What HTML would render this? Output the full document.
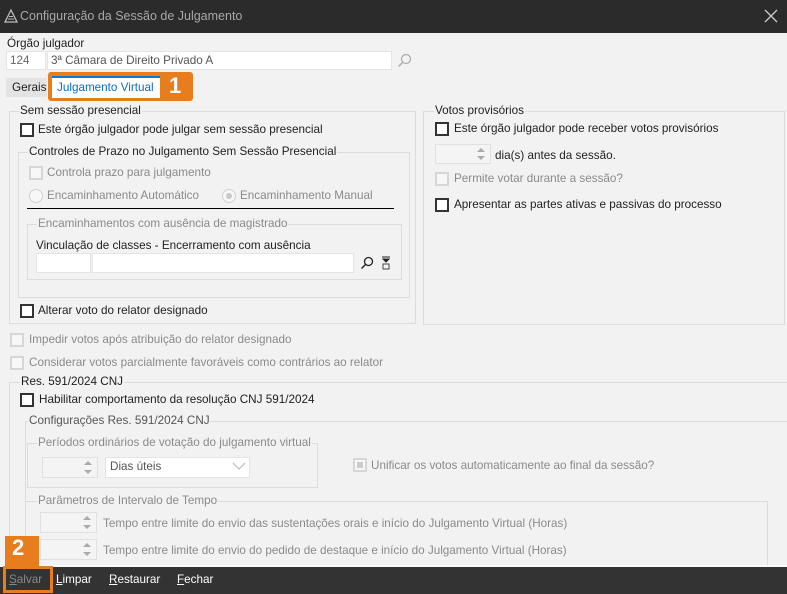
<!DOCTYPE html>
<html style="overflow:hidden;width:787px;height:594px"><head><meta charset="utf-8"><style>
*{box-sizing:border-box;margin:0;padding:0}
body{width:787px;height:594px;background:#f2f2f2;font-family:"Liberation Sans",sans-serif;font-size:11.7px;color:#1e1e1e;position:relative;overflow:hidden}
.a{position:absolute;white-space:nowrap}
.g{position:absolute;border:1px solid #dcdcdc}
.lg{position:absolute;background:#f2f2f2;padding:0 1px;line-height:14px;white-space:nowrap}
.cb{position:absolute;width:14px;height:14px;border:2px solid #333;background:#fff}
.cbd{position:absolute;width:14px;height:14px;border:2px solid #d6d6d6;background:#f7f7f7}
.dis{color:#8a8a8a}
.inp{position:absolute;background:#fff;border:1px solid #e4e4e4}
.sp{position:absolute;background:#f4f4f4;border:1px solid #e0e0e0}
.sp:after{content:"";position:absolute;right:5px;top:3px;border:4px solid transparent;border-bottom:4px solid #aaa;border-top:0}
.sp:before{content:"";position:absolute;right:5px;bottom:3px;border:4px solid transparent;border-top:4px solid #aaa;border-bottom:0}
.rd{position:absolute;width:14px;height:14px;border-radius:50%;border:1px solid #d0d0d0;background:#f7f7f7}
</style></head><body>
<div class="a" style="left:0;top:0;width:787px;height:33px;background:#2b2b2b"></div>
<svg class="a" style="left:4px;top:9px" width="14" height="14" viewBox="0 0 14 14"><path d="M7 1L1 13h12z" fill="none" stroke="#bbb" stroke-width="1.3"/><path d="M4 10h6M5 7.5h4" stroke="#bbb"/></svg>
<div class="a" style="left:20px;top:9px;color:#a8a8a8;font-size:12.5px">Configuração da Sessão de Julgamento</div>
<svg class="a" style="left:764px;top:9px" width="14" height="14"><path d="M1 1L13 13M13 1L1 13" stroke="#ccc" stroke-width="1.3"/></svg>

<div class="a" style="left:7px;top:37px">Órgão julgador</div>
<div class="inp" style="left:6px;top:51px;width:40px;height:19px"></div>
<div class="a dis" style="left:10px;top:54px;color:#666">124</div>
<div class="inp" style="left:47px;top:51px;width:345px;height:19px"></div>
<div class="a" style="left:51px;top:54px;color:#555">3ª Câmara de Direito Privado A</div>
<svg class="a" style="left:397px;top:53px" width="15" height="15"><circle cx="9" cy="6" r="4.5" fill="none" stroke="#aaa" stroke-width="1.2"/><path d="M6 9L1.5 13.5" stroke="#aaa" stroke-width="1.3"/></svg>

<div class="a" style="left:6px;top:78px;width:41px;height:19px;background:#e3e3e3"></div>
<div class="a" style="left:12px;top:81px">Gerais</div>
<div class="a" style="left:48px;top:72px;width:145px;height:29px;background:#e87d1e;border-radius:3px"></div>
<div class="a" style="left:52px;top:76px;width:108px;height:22px;background:#fff;border-top:2px solid #0a7ad8"></div>
<div class="a" style="left:57px;top:81px;color:#0a6cc4">Julgamento Virtual</div>
<div class="a" style="left:169px;top:73px;color:#fff;font-size:22px;font-weight:bold">1</div>

<div class="g" style="left:9px;top:111px;width:407px;height:213px"></div>
<div class="lg" style="left:19px;top:104px">Sem sessão presencial</div>
<div class="cb" style="left:20px;top:123px"></div>
<div class="a" style="left:38px;top:123px">Este órgão julgador pode julgar sem sessão presencial</div>
<div class="g" style="left:18px;top:152px;width:392px;height:146px"></div>
<div class="lg" style="left:28px;top:145px">Controles de Prazo no Julgamento Sem Sessão Presencial</div>
<div class="cbd" style="left:29px;top:166px"></div>
<div class="a dis" style="left:47px;top:166px">Controla prazo para julgamento</div>
<div class="rd" style="left:29px;top:189px"></div>
<div class="a dis" style="left:47px;top:189px">Encaminhamento Automático</div>
<div class="rd" style="left:222px;top:189px"></div>
<div class="a" style="left:226px;top:193px;width:6px;height:6px;border-radius:50%;background:#c8c8c8"></div>
<div class="a dis" style="left:240px;top:189px">Encaminhamento Manual</div>
<div class="a" style="left:27px;top:208px;width:367px;height:1px;background:#000"></div>
<div class="g" style="left:27px;top:224px;width:375px;height:56px"></div>
<div class="lg dis" style="left:37px;top:217px">Encaminhamentos com ausência de magistrado</div>
<div class="a" style="left:36px;top:239px">Vinculação de classes - Encerramento com ausência</div>
<div class="inp" style="left:36px;top:253px;width:55px;height:20px"></div>
<div class="inp" style="left:92px;top:253px;width:262px;height:20px"></div>
<svg class="a" style="left:360px;top:256px" width="14" height="14"><circle cx="8.5" cy="5.5" r="4" fill="none" stroke="#222" stroke-width="1.3"/><path d="M5.5 8.5L1.5 12.5" stroke="#222" stroke-width="1.4"/></svg>
<svg class="a" style="left:381px;top:256px" width="11" height="14"><path d="M1 1h8M2 3h6l-3 3z" stroke="#222" fill="#222"/><rect x="2" y="8" width="6" height="5" fill="none" stroke="#444"/></svg>
<div class="cb" style="left:20px;top:304px"></div>
<div class="a" style="left:38px;top:304px">Alterar voto do relator designado</div>

<div class="g" style="left:423px;top:111px;width:362px;height:214px"></div>
<div class="lg" style="left:434px;top:104px">Votos provisórios</div>
<div class="cb" style="left:435px;top:122px"></div>
<div class="a" style="left:454px;top:122px">Este órgão julgador pode receber votos provisórios</div>
<div class="sp" style="left:435px;top:144px;width:56px;height:20px"></div>
<div class="a" style="left:495px;top:149px">dia(s) antes da sessão.</div>
<div class="cbd" style="left:435px;top:172px"></div>
<div class="a dis" style="left:454px;top:172px">Permite votar durante a sessão?</div>
<div class="cb" style="left:435px;top:198px"></div>
<div class="a" style="left:454px;top:198px">Apresentar as partes ativas e passivas do processo</div>

<div class="cbd" style="left:10px;top:333px"></div>
<div class="a dis" style="left:29px;top:333px">Impedir votos após atribuição do relator designado</div>
<div class="cbd" style="left:10px;top:356px"></div>
<div class="a dis" style="left:29px;top:356px">Considerar votos parcialmente favoráveis como contrários ao relator</div>

<div class="g" style="left:9px;top:382px;width:790px;height:200px"></div>
<div class="lg" style="left:20px;top:375px">Res. 591/2024 CNJ</div>
<div class="cb" style="left:20px;top:393px"></div>
<div class="a" style="left:39px;top:393px">Habilitar comportamento da resolução CNJ 591/2024</div>
<div class="g" style="left:25px;top:421px;width:770px;height:160px"></div>
<div class="lg dis" style="left:28px;top:414px;color:#555">Configurações Res. 591/2024 CNJ</div>
<div class="g" style="left:27px;top:443px;width:291px;height:45px"></div>
<div class="lg dis" style="left:37px;top:436px">Períodos ordinários de votação do julgamento virtual</div>
<div class="sp" style="left:42px;top:457px;width:56px;height:21px"></div>
<div class="inp" style="left:105px;top:457px;width:145px;height:21px"></div>
<div class="a" style="left:110px;top:460px;color:#555">Dias úteis</div>
<svg class="a" style="left:232px;top:462px" width="14" height="9"><path d="M1 1l6 6 6-6" fill="none" stroke="#bbb" stroke-width="1.2"/></svg>
<div class="cbd" style="left:353px;top:458px"></div>
<div class="a" style="left:357px;top:462px;width:6px;height:6px;background:#ccc"></div>
<div class="a dis" style="left:371px;top:459px">Unificar os votos automaticamente ao final da sessão?</div>
<div class="g" style="left:25px;top:501px;width:743px;height:80px"></div>
<div class="lg dis" style="left:37px;top:494px">Parâmetros de Intervalo de Tempo</div>
<div class="sp" style="left:40px;top:512px;width:57px;height:21px"></div>
<div class="a dis" style="left:103px;top:517px">Tempo entre limite do envio das sustentações orais e início do Julgamento Virtual (Horas)</div>
<div class="sp" style="left:40px;top:539px;width:57px;height:21px"></div>
<div class="a dis" style="left:103px;top:544px">Tempo entre limite do envio do pedido de destaque e início do Julgamento Virtual (Horas)</div>

<div class="a" style="left:0;top:565px;width:787px;height:2px;background:#fafafa"></div>
<div class="a" style="left:0;top:567px;width:787px;height:27px;background:#333"></div>
<div class="a" style="left:5px;top:536px;width:34px;height:31px;background:#e87d1e"></div>
<div class="a" style="left:12px;top:535px;color:#fff;font-size:22px;font-weight:bold">2</div>
<div class="a" style="left:3px;top:566px;width:50px;height:27px;border:3px solid #e87d1e"></div>
<div class="a" style="left:9px;top:573px;color:#888"><u>S</u>alvar</div>
<div class="a" style="left:56px;top:573px;color:#fff"><u>L</u>impar</div>
<div class="a" style="left:109px;top:573px;color:#fff"><u>R</u>estaurar</div>
<div class="a" style="left:177px;top:573px;color:#fff"><u>F</u>echar</div>
</body></html>
